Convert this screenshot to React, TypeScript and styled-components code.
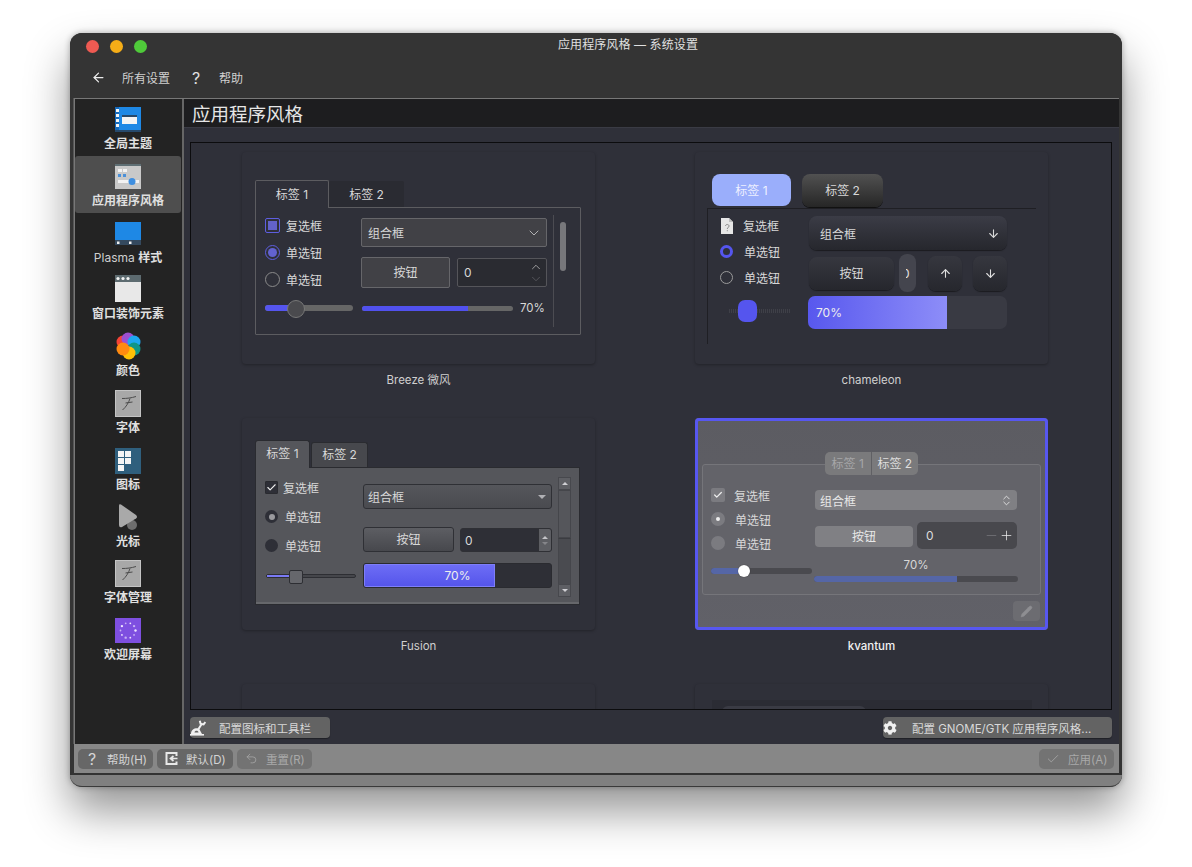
import React from "react";
import styled, { createGlobalStyle } from "styled-components";
import { ArrowLeft, ArrowUp, ArrowDown, ChevronDown, ChevronUp, ChevronsUpDown, Check, Plus, Minus, Pencil, Undo2 } from "lucide-react";
import { FaCog } from "react-icons/fa";

const FONT = `"Inter", "Noto Sans CJK SC", "Noto Sans", sans-serif`;

const Global = createGlobalStyle`
  html, body { margin: 0; padding: 0; background: #fff; }
  body { font-family: ${FONT}; font-size: 12px; color: #d8d8d8; }
  * { box-sizing: border-box; }
`;

const Page = styled.div`
  width: 1192px;
  height: 867px;
  padding: 33px 70px 0;
  overflow: hidden;
  background: #fff;
`;
const Window = styled.div`
  width: 1052px;
  height: 754px;
  border-radius: 12px;
  background: #343434;
  overflow: hidden;
  display: flex;
  flex-direction: column;
  box-shadow: 0 24px 44px rgba(0, 0, 0, 0.42), 0 0 6px rgba(0, 0, 0, 0.3);
  border-bottom: 1px solid #3a3a3a;
`;
const TitleBar = styled.div`
  height: 26px;
  flex: none;
  display: flex;
  align-items: center;
  padding: 0 16px;
  position: relative;
  gap: 11px;
  background: #343434;
`;
const Light = styled.span<{ $c: string }>`
  width: 13px;
  height: 13px;
  border-radius: 50%;
  background: ${(p) => p.$c};
  flex: none;
`;
const WindowTitle = styled.div`
  position: absolute;
  left: 64px;
  right: 0;
  top: 3px;
  text-align: center;
  font-size: 12px;
  letter-spacing: 0.1px;
  line-height: 18px;
  color: #e0e0e0;
`;
const ToolBar = styled.div`
  height: 39px;
  flex: none;
  display: flex;
  align-items: center;
  padding: 0 0 2px 21px;
  color: #d0d0d0;
  font-size: 12px;
  background: #343434;
`;
const ToolLabel = styled.span<{ $w: number }>`
  width: ${(p) => p.$w}px;
  flex: none;
  margin-left: 16px;
`;
const ToolGlyph = styled.span`
  width: 14px;
  margin-left: 19px;
  font-size: 16px;
  color: #e0e0e0;
  text-align: center;
  flex: none;
`;
const Body = styled.div`
  flex: 1;
  min-height: 0;
  display: flex;
  flex-direction: column;
  padding: 0 3px 0 4px;
`;
const Upper = styled.div`
  flex: 1;
  min-height: 0;
  display: flex;
  border: 1px solid #777;
  border-width: 1px 0 0 1px;
  background: #2f3039;
  box-shadow: -1px 0 0 #555;
`;
const Sidebar = styled.nav`
  width: 107px;
  flex: none;
  background: #232323;
`;
const SideItem = styled.div<{ $on?: boolean }>`
  height: 56.8px;
  padding-top: 8px;
  margin: 0 1px 0 0;
  display: flex;
  flex-direction: column;
  align-items: center;
  border-radius: 3px;
  background: ${(p) => (p.$on ? "#4e4e4e" : "transparent")};
`;
const IconSlot = styled.div`
  height: 26px;
  flex: none;
  display: flex;
  align-items: flex-start;
  svg { display: block; }
`;
const SideLabel = styled.span`
  font-size: 12px;
  line-height: 16px;
  margin-top: 3px;
  font-weight: 700;
  color: #e0e0e0;
  white-space: nowrap;
`;
const LatinWord = styled.span`
  font-weight: 400;
  color: #cfcfcf;
`;
const Split = styled.div`
  width: 2px;
  flex: none;
  background: #666;
`;
const Main = styled.div`
  flex: 1;
  min-width: 0;
  display: flex;
  flex-direction: column;
  background: #2f3039;
`;
const Heading = styled.h1`
  height: 29px;
  flex: none;
  margin: 0;
  padding: 0 0 0 8px;
  background: #1d1d1f;
  border-bottom: 1px solid #3a3b44;
  font-size: 18.5px;
  font-weight: 400;
  line-height: 31px;
  color: #e6e6e6;
`;
const View = styled.div`
  height: 568px;
  flex: none;
  margin: 14px 7px 0 6px;
  border: 1px solid #0c0c0e;
  overflow: hidden;
  background: #2f3039;
  padding: 9px 0 0 51px;
  display: grid;
  grid-template-columns: 353px 353px;
  column-gap: 100px;
  grid-auto-rows: 266px;
`;
const Cell = styled.div`
  display: flex;
  flex-direction: column;
`;
const Card = styled.div<{ $sel?: boolean }>`
  width: 353px;
  height: 212px;
  flex: none;
  position: relative;
  border-radius: 4px;
  background: ${(p) => (p.$sel ? "linear-gradient(#5c5c62,#616168)" : "#2f3039")};
  box-shadow: ${(p) =>
    p.$sel ? "inset 0 0 0 3px #5757f0" : "0 1px 3px rgba(0,0,0,.28)"};
`;
const CardName = styled.div<{ $b?: boolean }>`
  height: 33px;
  line-height: 33px;
  text-align: center;
  font-size: 11.5px;
  color: ${(p) => (p.$b ? "#f2f2f2" : "#cfcfcf")};
  font-weight: ${(p) => (p.$b ? 500 : 400)};
`;
const Actions = styled.div`
  flex: none;
  display: flex;
  justify-content: space-between;
  margin: 7px 7px 0 6px;
  height: 21px;
`;
const ActionBtn = styled.div<{ $w: number; $iw: number }>`
  width: ${(p) => p.$w}px;
  height: 21px;
  border-radius: 4px;
  background: #636363;
  display: flex;
  align-items: center;
  font-size: 11.5px;
  color: #d8d8d8;
  box-shadow: 0 1px 1px rgba(0, 0, 0, 0.35);
  svg { flex: none; width: ${(p) => p.$iw}px; }
`;
const ActionText = styled.span<{ $ml: number }>`
  margin-left: ${(p) => p.$ml}px;
  white-space: nowrap;
`;
const Footer = styled.div`
  height: 31px;
  flex: none;
  background: #878787;
  display: flex;
  align-items: center;
  padding: 0 5px 0 4px;
  gap: 4px;
  border-bottom: 2px solid #333;
`;
const FootBtn = styled.div<{ $off?: boolean; $w: number; $right?: boolean }>`
  width: ${(p) => p.$w}px;
  height: 20px;
  border-radius: 5px;
  background: ${(p) => (p.$off ? "#737373" : "#676767")};
  color: ${(p) => (p.$off ? "#a9a9a9" : "#d4d4d4")};
  display: flex;
  align-items: center;
  font-size: 11.5px;
  margin-left: ${(p) => (p.$right ? "auto" : "0")};
`;
const FootIcon = styled.span`
  width: 28px;
  flex: none;
  display: flex;
  justify-content: center;
  font-size: 16px;
`;
const FootText = styled.span`
  white-space: nowrap;
  padding-left: 1px;
`;
const Rim = styled.div`
  height: 11px;
  flex: none;
  background: #808080;
  margin: 0 -3px 0 -4px;
`;

/* ---------- Breeze ---------- */
const BreezeRoot = styled.div`
  padding: 28px 0 0 13px;
`;
const BreezeTabs = styled.div`
  display: flex;
  height: 27px;
`;
const BreezeTab = styled.div<{ $on?: boolean }>`
  width: ${(p) => (p.$on ? 74 : 75)}px;
  height: ${(p) => (p.$on ? 28 : 26)}px;
  margin-top: ${(p) => (p.$on ? 0 : 1)}px;
  background: ${(p) => (p.$on ? "#2f3039" : "#2a2b32")};
  border: ${(p) => (p.$on ? "1px solid #5c5c60" : "0")};
  border-bottom: 0;
  border-radius: 2px 2px 0 0;
  text-align: center;
  line-height: 27px;
  position: relative;
  z-index: 1;
  font-size: 12px;
`;
const BreezePanel = styled.div`
  width: 326px;
  height: 128px;
  border: 1px solid #5c5c60;
  border-radius: 1px;
  display: flex;
  padding: 10px 0 0 9px;
`;
const BreezeLeft = styled.div`
  width: 88px;
  display: flex;
  flex-direction: column;
  gap: 12px;
`;
const OptRow = styled.div<{ $gap: number; $h?: number; $mt?: number }>`
  display: flex;
  align-items: center;
  gap: ${(p) => p.$gap}px;
  height: ${(p) => p.$h ?? 15}px;
  margin-top: ${(p) => p.$mt ?? 0}px;
  white-space: nowrap;
  font-size: 12px;
`;
const BreezeCheck = styled.span`
  width: 15px;
  height: 15px;
  flex: none;
  border: 1px solid #5e5ee0;
  border-radius: 2px;
  padding: 2px;
  &::after { content: ""; display: block; height: 100%; background: #6262c8; }
`;
const BreezeRadio = styled.span<{ $on?: boolean }>`
  width: 15px;
  height: 15px;
  flex: none;
  border-radius: 50%;
  border: 1px solid ${(p) => (p.$on ? "#5e5ee0" : "#8a8a8a")};
  padding: 2px;
  &::after {
    content: "";
    display: block;
    height: 100%;
    border-radius: 50%;
    background: ${(p) => (p.$on ? "#6262d0" : "transparent")};
  }
`;
const BreezeSlider = styled.div`
  height: 6px;
  margin-top: 6px;
  border-radius: 3px;
  background: #666;
  position: relative;
  &::before { content: ""; position: absolute; left: 0; top: 0; height: 6px; width: 24px; border-radius: 3px 0 0 3px; background: #5555ee; }
  &::after { content: ""; position: absolute; left: 22px; top: -5px; width: 16px; height: 16px; border-radius: 50%; background: #4a4a4e; border: 1px solid #777; }
`;
const BreezeMid = styled.div`
  width: 186px;
  margin-left: 8px;
  display: flex;
  flex-direction: column;
`;
const BreezeCombo = styled.div`
  height: 29px;
  border: 1px solid #66666a;
  border-radius: 2px;
  background: #414146;
  display: flex;
  align-items: center;
  justify-content: space-between;
  padding: 0 4px 0 6px;
  svg { color: #cfcfcf; }
`;
const BreezeRow = styled.div`
  display: flex;
  gap: 7px;
  margin-top: 10px;
`;
const BreezeBtn = styled.div`
  width: 89px;
  height: 31px;
  border: 1px solid #66666a;
  border-radius: 2px;
  background: #414146;
  text-align: center;
  line-height: 29px;
`;
const BreezeSpin = styled.div`
  width: 90px;
  height: 29px;
  margin-top: 1px;
  border: 1px solid #55555a;
  border-radius: 2px;
  background: #2a2b31;
  display: flex;
  align-items: center;
  justify-content: space-between;
  padding: 0 3px 0 6px;
`;
const SpinArrows = styled.div`
  display: flex;
  flex-direction: column;
  align-items: center;
  svg { display: block; margin: -1px 0; }
`;
const BreezeProgRow = styled.div`
  display: flex;
  align-items: center;
  margin: 12px 0 0 1px;
  height: 16px;
`;
const BreezeBar = styled.div`
  width: 151px;
  height: 5px;
  border-radius: 3px;
  background: #666;
  overflow: hidden;
  &::before { content: ""; display: block; height: 100%; width: 70%; background: #5151ee; }
`;
const BreezePct = styled.span`
  margin-left: 7px;
  font-size: 11.5px;
`;
const BreezeRule = styled.div`
  width: 1px;
  height: 112px;
  margin: -3px 0 0 6px;
  background: #4c4c52;
`;
const BreezeThumb = styled.div`
  width: 6px;
  height: 49px;
  margin: 4px 0 0 6px;
  border-radius: 3px;
  background: #77777b;
`;

/* ---------- Chameleon ---------- */
const ChamRoot = styled.div`
  padding: 22px 0 0 13px;
`;
const ChamTabs = styled.div`
  display: flex;
  gap: 11px;
  padding-left: 4px;
  height: 33px;
`;
const ChamTab = styled.div<{ $on?: boolean }>`
  width: ${(p) => (p.$on ? 79 : 81)}px;
  height: ${(p) => (p.$on ? 32 : 33)}px;
  border-radius: 8px;
  background: ${(p) => (p.$on ? "#9aaefb" : "linear-gradient(#515151,#262626)")};
  color: ${(p) => (p.$on ? "#eef0ff" : "#d8d8d8")};
  box-shadow: ${(p) => (p.$on ? "none" : "0 1px 0 #111")};
  text-align: center;
  line-height: 33px;
`;
const ChamPanel = styled.div`
  width: 329px;
  height: 136px;
  margin-top: 1px;
  margin-left: -1px;
  border-top: 1px solid #1f1f24;
  border-left: 1px solid #1f1f24;
  display: flex;
  padding: 7px 0 0 12px;
`;
const ChamLeft = styled.div`
  width: 88px;
  flex: none;
  display: flex;
  flex-direction: column;
  gap: 11px;
  margin-top: 2px;
`;
const ChamRadio = styled.span<{ $on?: boolean }>`
  width: 13px;
  height: 13px;
  flex: none;
  border-radius: 50%;
  border: ${(p) => (p.$on ? "3px solid #5555ee" : "1px solid #9a9a9a")};
`;
const ChamSlider = styled.div`
  height: 22px;
  width: 62px;
  margin: 4px 0 0 9px;
  position: relative;
  background: repeating-linear-gradient(90deg, #3f4048 0 1px, transparent 1px 2px) 0 9px / 100% 4px no-repeat;
  &::after { content: ""; position: absolute; left: 9px; top: 0; width: 19px; height: 22px; border-radius: 7px; background: #5555ee; }
`;
const ChamRight = styled.div`
  width: 199px;
  display: flex;
  flex-direction: column;
`;
const ChamCombo = styled.div`
  height: 34px;
  width: 198px;
  margin-left: 1px;
  border-radius: 8px;
  background: linear-gradient(#3b3c46, #26272d);
  box-shadow: 0 1px 1px #1b1b20;
  display: flex;
  align-items: center;
  justify-content: space-between;
  padding: 0 7px 0 11px;
`;
const ChamRow = styled.div`
  display: flex;
  align-items: center;
  height: 38px;
  margin: 4px 0 0 1px;
`;
const ChamBtn = styled.div`
  width: 85px;
  height: 33px;
  border-radius: 8px;
  background: linear-gradient(#36373f, #26272d);
  box-shadow: 0 1px 1px #1b1b20;
  text-align: center;
  line-height: 33px;
`;
const ChamSpin = styled.div`
  width: 17px;
  height: 38px;
  margin-left: 5px;
  border-radius: 8px;
  background: #44454e;
  display: flex;
  align-items: center;
  justify-content: center;
`;
const Clipped = styled.span`
  width: 4px;
  overflow: hidden;
  display: flex;
  justify-content: flex-end;
  font-size: 12px;
  color: #e4e4e4;
`;
const ChamStep = styled.div<{ $ml: number }>`
  width: 34px;
  height: 35px;
  margin-left: ${(p) => p.$ml}px;
  border-radius: 8px;
  background: linear-gradient(#36373f, #26272d);
  box-shadow: 0 1px 1px #1b1b20;
  display: flex;
  align-items: center;
  justify-content: center;
  color: #e0e0e0;
`;
const ChamBar = styled.div`
  height: 33px;
  width: 199px;
  margin-top: 4px;
  border-radius: 7px;
  overflow: hidden;
  background: #393a43;
`;
const ChamFill = styled.div`
  width: 70%;
  height: 100%;
  background: linear-gradient(90deg, #5858ee, #8d8df8);
  padding-left: 8px;
  line-height: 33px;
  font-size: 12px;
  color: #eee;
`;

/* ---------- Fusion ---------- */
const FusRoot = styled.div`
  padding: 22px 0 0 13px;
`;
const FusTabs = styled.div`
  display: flex;
  gap: 1px;
  height: 27px;
  align-items: flex-end;
`;
const FusTab = styled.div<{ $on?: boolean }>`
  width: ${(p) => (p.$on ? 55 : 57)}px;
  height: ${(p) => (p.$on ? 28 : 25)}px;
  border: 1px solid #2a2b30;
  border-bottom: 0;
  border-radius: 3px 3px 0 0;
  background: ${(p) => (p.$on ? "#55565b" : "#47484d")};
  text-align: center;
  line-height: ${(p) => (p.$on ? 26 : 24)}px;
  position: relative;
  z-index: 1;
  margin-bottom: ${(p) => (p.$on ? -1 : 0)}px;
`;
const FusPanel = styled.div`
  width: 325px;
  height: 138px;
  background: #55565b;
  border: 1px solid #2a2b30;
  box-shadow: inset 0 -2px 0 #66676b;
  display: flex;
  padding: 9px 0 0 9px;
`;
const FusLeft = styled.div`
  width: 98px;
  flex: none;
  margin-top: 4px;
  display: flex;
  flex-direction: column;
`;
const FusCheck = styled.span`
  width: 13px;
  height: 13px;
  flex: none;
  background: #2e2f37;
  border: 1px solid #2a2b30;
  border-radius: 1px;
  color: #eee;
  display: flex;
  align-items: center;
  justify-content: center;
`;
const FusRadio = styled.span<{ $on?: boolean }>`
  width: 13px;
  height: 13px;
  flex: none;
  border-radius: 50%;
  background: #2e2f37;
  padding: 3.5px;
  &::after {
    content: "";
    display: block;
    height: 100%;
    border-radius: 50%;
    background: ${(p) => (p.$on ? "#9a9a9e" : "transparent")};
  }
`;
const FusSlider = styled.div`
  width: 90px;
  height: 4px;
  margin: 22px 0 0 1px;
  border: 1px solid #2d2e33;
  border-radius: 2px;
  background: #45464b;
  position: relative;
  &::before { content: ""; position: absolute; left: 0; top: 0; height: 2px; width: 24px; background: #7a7af5; }
  &::after { content: ""; position: absolute; left: 22px; top: -5px; width: 12px; height: 12px; border-radius: 2px; background: #66676c; border: 1px solid #2d2e33; }
`;
const FusMid = styled.div`
  width: 189px;
  flex: none;
  margin-top: 7px;
  display: flex;
  flex-direction: column;
`;
const FusCombo = styled.div`
  height: 25px;
  border: 1px solid #2f3035;
  border-radius: 3px;
  background: linear-gradient(#55565b, #4a4b50);
  display: flex;
  align-items: center;
  justify-content: space-between;
  padding: 0 4px 0 4px;
  &::after { content: ""; border: 4px solid transparent; border-top: 4px solid #b0b0b4; border-bottom: 0; margin-right: 1px; }
`;
const FusRow = styled.div`
  display: flex;
  gap: 6px;
  margin-top: 18px;
`;
const FusBtn = styled.div`
  width: 91px;
  height: 25px;
  border: 1px solid #2f3035;
  border-radius: 3px;
  background: linear-gradient(#5d5e63, #47484d);
  text-align: center;
  line-height: 23px;
`;
const FusSpin = styled.div`
  width: 92px;
  height: 24px;
  margin-top: 1px;
  border: 1px solid #2f3035;
  border-radius: 3px;
  background: #2e2f36;
  display: flex;
  align-items: center;
  justify-content: space-between;
  padding-left: 4px;
  overflow: hidden;
`;
const FusSpinBtns = styled.div`
  width: 13px;
  height: 100%;
  background: #5d5e63;
  border-left: 1px solid #2f3035;
  display: flex;
  flex-direction: column;
  align-items: center;
  justify-content: center;
  gap: 3px;
`;
const Tri = styled.span<{ $dir: "up" | "down"; $c: string }>`
  border: 3.5px solid transparent;
  border-bottom-color: ${(p) => (p.$dir === "up" ? p.$c : "transparent")};
  border-top-color: ${(p) => (p.$dir === "down" ? p.$c : "transparent")};
  border-${(p) => (p.$dir === "up" ? "top" : "bottom")}-width: 0;
`;
const FusBar = styled.div`
  height: 25px;
  margin-top: 11px;
  border: 1px solid #2a2b30;
  border-radius: 3px;
  background: #2e2f36;
  overflow: hidden;
`;
const FusFill = styled.div`
  width: 70%;
  height: 100%;
  background: linear-gradient(#6d6df6, #5555ea);
  border: 1px solid #7e7ef8;
  text-align: center;
  line-height: 21px;
  padding-left: 56px;
  color: #eee;
`;
const FusScroll = styled.div`
  width: 13px;
  height: 120px;
  flex: none;
  margin-left: 6px;
  display: flex;
  flex-direction: column;
  background: #4a4b50;
`;
const FusScrollBtn = styled.div`
  height: 13px;
  flex: none;
  background: #5e5f64;
  border: 1px solid #47484d;
  display: flex;
  align-items: center;
  justify-content: center;
`;
const FusScrollThumb = styled.div`
  height: 48px;
  background: #55565b;
  border: 1px solid #45464b;
  flex: none;
`;
const FusScrollRest = styled.div`
  flex: 1;
  border-top: 1px solid #3b3c41;
  border-left: 1px solid #45464b;
  border-right: 1px solid #45464b;
`;

/* ---------- Kvantum ---------- */
const KvRoot = styled.div`
  padding: 34px 0 0 7px;
`;
const KvTabs = styled.div`
  width: 93px;
  height: 23px;
  margin: 0 0 -11px 123px;
  display: flex;
  position: relative;
  z-index: 1;
  border-radius: 5px;
  overflow: hidden;
  background: #7a7a7c;
`;
const KvTab = styled.div<{ $on?: boolean }>`
  width: 50%;
  text-align: center;
  line-height: 24px;
  color: ${(p) => (p.$on ? "#a6a6a8" : "#dedede")};
  font-size: 12px;
  border-right: ${(p) => (p.$on ? "1px solid #606064" : "0")};
`;
const KvPanel = styled.div`
  width: 339px;
  height: 131px;
  border: 1px solid #75757a;
  border-radius: 3px;
  background: #636369;
  display: flex;
  padding: 23px 0 0 8px;
`;
const KvLeft = styled.div`
  width: 101px;
  flex: none;
  display: flex;
  flex-direction: column;
  gap: 10px;
`;
const KvCheck = styled.span`
  width: 14px;
  height: 14px;
  flex: none;
  border-radius: 2px;
  background: #7b7b80;
  color: #eee;
  display: flex;
  align-items: center;
  justify-content: center;
`;
const KvRadio = styled.span<{ $on?: boolean }>`
  width: 14px;
  height: 14px;
  flex: none;
  border-radius: 50%;
  background: #7b7b80;
  padding: 5px;
  &::after {
    content: "";
    display: block;
    height: 100%;
    border-radius: 50%;
    background: ${(p) => (p.$on ? "#eee" : "transparent")};
  }
`;
const KvSlider = styled.div`
  width: 101px;
  height: 6px;
  margin-top: 8px;
  border-radius: 3px;
  background: #4a4a4f;
  position: relative;
  &::before { content: ""; position: absolute; left: 0; top: 0; height: 6px; width: 33px; border-radius: 3px 0 0 3px; background: #5566a6; }
  &::after { content: ""; position: absolute; left: 27px; top: -3px; width: 12px; height: 12px; border-radius: 50%; background: #fff; box-shadow: 0 0 1px #222; }
`;
const KvMid = styled.div`
  width: 204px;
  margin-left: 2px;
  margin-top: 2px;
  display: flex;
  flex-direction: column;
`;
const KvCombo = styled.div`
  width: 202px;
  margin-left: 1px;
  height: 20px;
  border-radius: 4px;
  background: #808084;
  display: flex;
  align-items: center;
  justify-content: space-between;
  padding: 0 4px 0 5px;
  color: #e8e8e8;
`;
const KvRow = styled.div`
  display: flex;
  align-items: flex-start;
  gap: 4px;
  margin: 12px 0 0 1px;
`;
const KvBtn = styled.div`
  width: 98px;
  height: 21px;
  margin-top: 4px;
  border-radius: 4px;
  background: #808084;
  text-align: center;
  line-height: 21px;
  color: #e8e8e8;
`;
const KvSpin = styled.div`
  width: 100px;
  height: 27px;
  border-radius: 5px;
  background: #48484d;
  display: flex;
  align-items: center;
  padding: 0 3px 0 9px;
  color: #ddd;
`;
const KvZero = styled.span`
  flex: 1;
`;
const KvPct = styled.div`
  text-align: center;
  line-height: 14px;
  margin-top: 9px;
  font-size: 11.5px;
`;
const KvBar = styled.div`
  height: 6px;
  margin-top: 4px;
  border-radius: 3px;
  background: #4a4a4f;
  overflow: hidden;
  &::before { content: ""; display: block; height: 100%; width: 70%; background: #5566a6; }
`;
const KvEdit = styled.div`
  position: absolute;
  right: 8px;
  bottom: 9px;
  width: 27px;
  height: 20px;
  border-radius: 4px;
  background: #6c6c71;
  display: flex;
  align-items: center;
  justify-content: center;
  color: #8e8e92;
`;

/* ---------- Row 3 hints ---------- */
const Hint = styled.div`
  margin: 0 0 0 17px;
  width: 320px;
  height: 30px;
  background: #2b2c34;
  position: relative;
  top: 16px;
  padding-top: 6px;
`;
const HintTop = styled.div`
  width: 144px;
  height: 8px;
  margin-left: 10px;
  background: #3a3b44;
  border-radius: 6px 6px 0 0;
`;

const Icon = styled.svg<{ $mt?: number }>`
  flex: none;
  margin-top: ${(p) => p.$mt ?? 0}px;
`;

const GlobalIcon = () => (
  <Icon width="28" height="26" viewBox="0 0 28 26">
    <rect x="1" y="0" width="26" height="23" fill="#1e88e5" />
    <rect x="1" y="23" width="26" height="2" fill="#27496b" />
    <rect x="1" y="0" width="4" height="23" fill="#1668b8" />
    {[2, 7, 12, 17].map((y) => <rect key={y} x="2" y={y} width="3" height="3" fill="#f4f4f4" />)}
    <rect x="8" y="8" width="15" height="9" fill="#f4f4f4" />
    <rect x="8" y="8" width="15" height="2" fill="#27496b" />
  </Icon>
);
const AppStyleIcon = () => (
  <Icon width="28" height="26" viewBox="0 0 28 26">
    <rect x="1" y="0" width="26" height="25" fill="#c9c9c9" />
    <rect x="1" y="0" width="26" height="2" fill="#5f6f74" />
    {[4, 9].map((x) => <rect key={x} x={x} y="5" width="4" height="3" fill="#f2f2f2" />)}
    {[4, 9].map((x) => <rect key={x} x={x} y="10" width="3" height="3" fill="#4a90d9" />)}
    <rect x="4" y="16" width="21" height="3" fill="#f2f2f2" />
    <circle cx="18" cy="17.5" r="3.5" fill="#3f8fe0" />
  </Icon>
);
const PlasmaIcon = () => (
  <Icon width="28" height="26" viewBox="0 0 28 26">
    <rect x="1" y="1" width="26" height="18" fill="#1e88e5" />
    <rect x="1" y="19" width="26" height="5" fill="#34495e" />
    <rect x="3" y="20.5" width="2.5" height="2.5" fill="#eee" />
    <rect x="15" y="20.5" width="2.5" height="2.5" fill="#eee" />
  </Icon>
);
const DecoIcon = () => (
  <Icon $mt={-2} width="28" height="28" viewBox="0 0 28 28">
    <rect x="1" y="0" width="26" height="27" fill="#e8e8e8" />
    <rect x="1" y="0" width="26" height="7" fill="#5d6b70" />
    {[4, 9, 14].map((x) => <circle key={x} cx={x} cy="3.5" r="1.6" fill="#f4f4f4" />)}
  </Icon>
);
const ColorIcon = () => (
  <Icon $mt={-2} width="28" height="28" viewBox="0 0 28 28">
    <circle cx="9" cy="10" r="6.5" fill="#f44336" />
    <circle cx="14" cy="7" r="6.5" fill="#9c4fd0" />
    <circle cx="20" cy="10" r="6.5" fill="#1ea7f0" />
    <circle cx="20" cy="17" r="6.5" fill="#0f9688" />
    <circle cx="15" cy="21" r="6.5" fill="#ffc107" />
    <circle cx="9" cy="17" r="6.5" fill="#ff8a10" />
  </Icon>
);
const FontIcon = () => (
  <Icon $mt={-1} width="28" height="27" viewBox="0 0 28 27">
    <rect x="1.5" y="0.5" width="25" height="26" fill="#a8a8a8" stroke="#c4c4c4" strokeWidth="1" />
    <path d="M8 8.5 C13 8.5 17 8 22 6.5 M16 8.5 C14.5 13 12 17 8.5 20 M11.5 13 L18.5 12" stroke="#4c4c4c" strokeWidth="1" fill="none" />
  </Icon>
);
const IconsIcon = () => (
  <Icon width="28" height="26" viewBox="0 0 28 26">
    <rect x="1" y="0" width="26" height="26" fill="#2f5f7d" />
    {[[4, 3], [11, 3], [4, 10], [11, 10], [4, 17]].map(([x, y]) => (
      <rect key={`${x}${y}`} x={x} y={y} width="6" height="6" fill="#f4f4f4" />
    ))}
  </Icon>
);
const CursorIcon = () => (
  <Icon $mt={-2} width="28" height="28" viewBox="0 0 28 28">
    <circle cx="18" cy="22" r="5" fill="#6e6e6e" />
    <path d="M5 2.5 Q5 0.5 7 1.5 L22 12 Q24 14 22 15.5 L8 24 Q5 25 5 22 Z" fill="#a9a9a9" />
  </Icon>
);
const WelcomeIcon = () => (
  <Icon width="28" height="26" viewBox="0 0 28 26">
    <rect x="1" y="0" width="26" height="25" fill="#7e4fe0" />
    {Array.from({ length: 10 }).map((_, i) => {
      const a = (i / 10) * Math.PI * 2;
      return <circle key={i} cx={14 + Math.cos(a) * 7.5} cy={12.5 + Math.sin(a) * 7.5} r={i % 3 === 0 ? 1.2 : 0.9} fill="#efe6ff" opacity={i % 2 ? 0.65 : 1} />;
    })}
  </Icon>
);
const ToolsIcon = () => (
  <Icon width="16" height="16" viewBox="0 0 16 16">
    <path d="M1 14 C1 9.5 5 7.5 9 8.5 L12 14 Z M4.5 12.5 H8.5 C8.5 10 4.5 10 4.5 12.5 Z" fill="#f0f0f0" fillRule="evenodd" />
    <rect x="0" y="14" width="14" height="1.6" fill="#f0f0f0" />
    <path d="M8.5 9 L12 3.5 M9.8 0.8 L10.6 3.8 L13.6 4.4 L15.4 2" stroke="#f0f0f0" strokeWidth="2" fill="none" />
  </Icon>
);
const DocIcon = () => (
  <Icon width="14" height="16" viewBox="0 0 14 16">
    <path d="M1 0 H9 L13 4 V16 H1 Z" fill="#e6e6e6" />
    <path d="M9 0 L13 4 H9 Z" fill="#bdbdbd" />
    <path d="M5.5 8 C5.5 6 9 6 9 8 C9 9.5 7.3 9.5 7.3 11 M7.3 12.2 V13.2" stroke="#888" strokeWidth="1" fill="none" />
  </Icon>
);
const DefaultIcon = () => (
  <Icon width="15" height="15" viewBox="0 0 15 15">
    <path d="M1.5 1 H13.5 V5 H11.5 V3 H3.5 V12 H11.5 V10.5 H13.5 V14 H1.5 Z" fill="#e8e8e8" />
    <path d="M13.5 7.5 H7 M9.5 5 L6.5 7.5 L9.5 10" stroke="#e8e8e8" strokeWidth="1.7" fill="none" />
  </Icon>
);

const sideItems: [React.ReactNode, React.ReactNode][] = [
  [<GlobalIcon />, "全局主题"],
  [<AppStyleIcon />, "应用程序风格"],
  [<PlasmaIcon />, <><LatinWord>Plasma </LatinWord>样式</>],
  [<DecoIcon />, "窗口装饰元素"],
  [<ColorIcon />, "颜色"],
  [<FontIcon />, "字体"],
  [<IconsIcon />, "图标"],
  [<CursorIcon />, "光标"],
  [<FontIcon />, "字体管理"],
  [<WelcomeIcon />, "欢迎屏幕"],
];

const BreezePreview = () => (
  <BreezeRoot>
    <BreezeTabs>
      <BreezeTab $on>标签 1</BreezeTab>
      <BreezeTab>标签 2</BreezeTab>
    </BreezeTabs>
    <BreezePanel>
      <BreezeLeft>
        <OptRow $gap={6}><BreezeCheck />复选框</OptRow>
        <OptRow $gap={6}><BreezeRadio $on />单选钮</OptRow>
        <OptRow $gap={6}><BreezeRadio />单选钮</OptRow>
        <BreezeSlider />
      </BreezeLeft>
      <BreezeMid>
        <BreezeCombo>组合框<ChevronDown size={16} strokeWidth={1.2} /></BreezeCombo>
        <BreezeRow>
          <BreezeBtn>按钮</BreezeBtn>
          <BreezeSpin>
            0
            <SpinArrows>
              <ChevronUp size={14} strokeWidth={1.2} color="#ccc" />
              <ChevronDown size={14} strokeWidth={1.2} color="#66666c" />
            </SpinArrows>
          </BreezeSpin>
        </BreezeRow>
        <BreezeProgRow><BreezeBar /><BreezePct>70%</BreezePct></BreezeProgRow>
      </BreezeMid>
      <BreezeRule />
      <BreezeThumb />
    </BreezePanel>
  </BreezeRoot>
);

const ChameleonPreview = () => (
  <ChamRoot>
    <ChamTabs>
      <ChamTab $on>标签 1</ChamTab>
      <ChamTab>标签 2</ChamTab>
    </ChamTabs>
    <ChamPanel>
      <ChamLeft>
        <OptRow $gap={9}><DocIcon />复选框</OptRow>
        <OptRow $gap={11}><ChamRadio $on />单选钮</OptRow>
        <OptRow $gap={11}><ChamRadio />单选钮</OptRow>
        <ChamSlider />
      </ChamLeft>
      <ChamRight>
        <ChamCombo>组合框<ArrowDown size={13} strokeWidth={2} /></ChamCombo>
        <ChamRow>
          <ChamBtn>按钮</ChamBtn>
          <ChamSpin><Clipped>0</Clipped></ChamSpin>
          <ChamStep $ml={12}><ArrowUp size={13} strokeWidth={2} /></ChamStep>
          <ChamStep $ml={11}><ArrowDown size={13} strokeWidth={2} /></ChamStep>
        </ChamRow>
        <ChamBar><ChamFill>70%</ChamFill></ChamBar>
      </ChamRight>
    </ChamPanel>
  </ChamRoot>
);

const FusionPreview = () => (
  <FusRoot>
    <FusTabs>
      <FusTab $on>标签 1</FusTab>
      <FusTab>标签 2</FusTab>
    </FusTabs>
    <FusPanel>
      <FusLeft>
        <OptRow $gap={5} $h={13}><FusCheck><Check size={11} strokeWidth={2.4} /></FusCheck>复选框</OptRow>
        <OptRow $gap={7} $h={13} $mt={16}><FusRadio $on />单选钮</OptRow>
        <OptRow $gap={7} $h={13} $mt={16}><FusRadio />单选钮</OptRow>
        <FusSlider />
      </FusLeft>
      <FusMid>
        <FusCombo>组合框</FusCombo>
        <FusRow>
          <FusBtn>按钮</FusBtn>
          <FusSpin>0<FusSpinBtns><Tri $dir="up" $c="#c4c4c8" /><Tri $dir="down" $c="#85858a" /></FusSpinBtns></FusSpin>
        </FusRow>
        <FusBar><FusFill>70%</FusFill></FusBar>
      </FusMid>
      <FusScroll>
        <FusScrollBtn><Tri $dir="up" $c="#d0d0d4" /></FusScrollBtn>
        <FusScrollThumb />
        <FusScrollRest />
        <FusScrollBtn><Tri $dir="down" $c="#d0d0d4" /></FusScrollBtn>
      </FusScroll>
    </FusPanel>
  </FusRoot>
);

const KvantumPreview = () => (
  <KvRoot>
    <KvTabs>
      <KvTab $on>标签 1</KvTab>
      <KvTab>标签 2</KvTab>
    </KvTabs>
    <KvPanel>
      <KvLeft>
        <OptRow $gap={9} $h={14}><KvCheck><Check size={10} strokeWidth={3} /></KvCheck>复选框</OptRow>
        <OptRow $gap={10} $h={14}><KvRadio $on />单选钮</OptRow>
        <OptRow $gap={10} $h={14}><KvRadio />单选钮</OptRow>
        <KvSlider />
      </KvLeft>
      <KvMid>
        <KvCombo>组合框<ChevronsUpDown size={13} strokeWidth={1.6} /></KvCombo>
        <KvRow>
          <KvBtn>按钮</KvBtn>
          <KvSpin>
            <KvZero>0</KvZero>
            <Minus size={15} strokeWidth={1.2} color="#77777c" />
            <Plus size={15} strokeWidth={1.2} color="#eee" />
          </KvSpin>
        </KvRow>
        <KvPct>70%</KvPct>
        <KvBar />
      </KvMid>
    </KvPanel>
    <KvEdit><Pencil size={13} fill="#8e8e92" strokeWidth={1} /></KvEdit>
  </KvRoot>
);

export default function App() {
  return (
    <Page>
      <Global />
      <Window>
        <TitleBar>
          <Light $c="#ee5a52" />
          <Light $c="#f5ad17" />
          <Light $c="#4fca3a" />
          <WindowTitle>应用程序风格 — 系统设置</WindowTitle>
        </TitleBar>
        <ToolBar>
          <ArrowLeft size={15} strokeWidth={2} color="#ececec" />
          <ToolLabel $w={48}>所有设置</ToolLabel>
          <ToolGlyph>?</ToolGlyph>
          <ToolLabel $w={30}>帮助</ToolLabel>
        </ToolBar>
        <Body>
          <Upper>
            <Sidebar>
              {sideItems.map(([icon, label], i) => (
                <SideItem key={i} $on={i === 1}>
                  <IconSlot>{icon}</IconSlot>
                  <SideLabel>{label}</SideLabel>
                </SideItem>
              ))}
            </Sidebar>
            <Split />
            <Main>
              <Heading>应用程序风格</Heading>
              <View>
                <Cell><Card><BreezePreview /></Card><CardName>Breeze 微风</CardName></Cell>
                <Cell><Card><ChameleonPreview /></Card><CardName>chameleon</CardName></Cell>
                <Cell><Card><FusionPreview /></Card><CardName>Fusion</CardName></Cell>
                <Cell><Card $sel><KvantumPreview /></Card><CardName $b>kvantum</CardName></Cell>
                <Cell><Card /></Cell>
                <Cell><Card><Hint><HintTop /></Hint></Card></Cell>
              </View>
              <Actions>
                <ActionBtn $w={140} $iw={16}><ToolsIcon /><ActionText $ml={13}>配置图标和工具栏</ActionText></ActionBtn>
                <ActionBtn $w={229} $iw={14}><FaCog size={14} color="#f0f0f0" /><ActionText $ml={15}>配置 GNOME/GTK 应用程序风格...</ActionText></ActionBtn>
              </Actions>
            </Main>
          </Upper>
          <Footer>
            <FootBtn $w={75}><FootIcon>?</FootIcon><FootText>帮助(H)</FootText></FootBtn>
            <FootBtn $w={76}><FootIcon><DefaultIcon /></FootIcon><FootText>默认(D)</FootText></FootBtn>
            <FootBtn $w={75} $off><FootIcon><Undo2 size={13} strokeWidth={1.4} /></FootIcon><FootText>重置(R)</FootText></FootBtn>
            <FootBtn $w={75} $off $right><FootIcon><Check size={14} strokeWidth={1.4} /></FootIcon><FootText>应用(A)</FootText></FootBtn>
          </Footer>
          <Rim />
        </Body>
      </Window>
    </Page>
  );
}
